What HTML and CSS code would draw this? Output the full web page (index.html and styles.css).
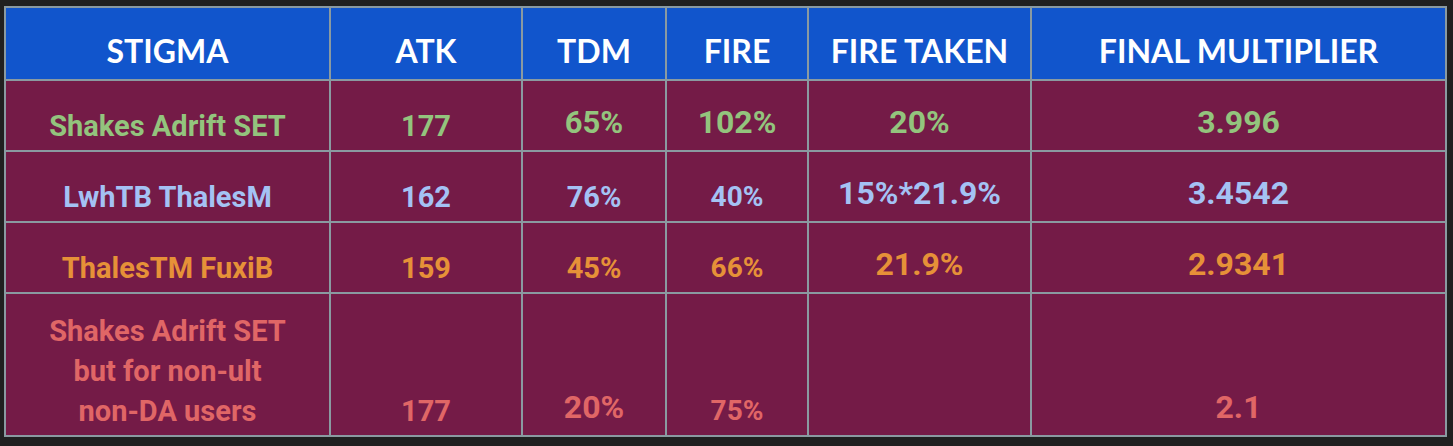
FILE: index.html
```html
<!DOCTYPE html>
<html>
<head>
<meta charset="utf-8">
<link rel="stylesheet" href="styles.css">
</head>
<body>
<div class="wrap">
<table class="sheet">
  <colgroup>
    <col class="c1"><col class="c2"><col class="c3"><col class="c4"><col class="c5"><col class="c6">
  </colgroup>
  <thead>
    <tr class="head">
      <th>STIGMA</th><th>ATK</th><th>TDM</th><th>FIRE</th><th>FIRE TAKEN</th><th>FINAL MULTIPLIER</th>
    </tr>
  </thead>
  <tbody>
    <tr class="row green">
      <td>Shakes Adrift SET</td><td>177</td><td class="mid">65%</td><td class="big">102%</td><td class="big">20%</td><td class="big">3.996</td>
    </tr>
    <tr class="row blue">
      <td>LwhTB ThalesM</td><td>162</td><td>76%</td><td class="small">40%</td><td class="big">15%*21.9%</td><td class="big">3.4542</td>
    </tr>
    <tr class="row orange">
      <td>ThalesTM FuxiB</td><td>159</td><td>45%</td><td class="small">66%</td><td class="big">21.9%</td><td class="big">2.9341</td>
    </tr>
    <tr class="row red tall">
      <td>Shakes Adrift SET<br>but for non-ult<br>non-DA users</td><td>177</td><td class="big">20%</td><td class="small">75%</td><td></td><td class="big">2.1</td>
    </tr>
  </tbody>
</table>
</div>
</body>
</html>
```
FILE: styles.css
```css
html, body {
  margin: 0;
  background: #202020;
}
.wrap {
  padding: 6px 0 0 4px;
}
.sheet {
  border-collapse: collapse;
  table-layout: fixed;
  width: 1443px;
}
.c1 { width: 325px; }
.c2 { width: 192px; }
.c3 { width: 144px; }
.c4 { width: 142px; }
.c5 { width: 223px; }
.c6 { width: 415px; }
.sheet th, .sheet td {
  border: 2px solid #8a9aa1;
  text-align: center;
  vertical-align: bottom;
  padding: 0 4px 4px;
  line-height: 40px;
  white-space: nowrap;
}
.head th {
  background: #1155cc;
  color: #ffffff;
  font-family: Lato, "Liberation Sans", sans-serif;
  font-weight: 700;
  font-size: 32px;
  height: 73px;
  box-sizing: border-box;
  padding-bottom: 8px;
}
.row td {
  background: #741b47;
  font-family: Roboto, "Liberation Sans", sans-serif;
  font-weight: 700;
  font-size: 29px;
  height: 71px;
  box-sizing: border-box;
}
.row td.big {
  font-size: 32px;
  padding-bottom: 8px;
}
.row td.mid {
  font-size: 31px;
  padding-bottom: 7px;
}
.row td.small {
  font-size: 28px;
}
.tall td { height: 143px; }
.green td { color: #93c47d; }
.blue td { color: #a4c2f4; }
.orange td { color: #e69138; }
.red td { color: #e06666; }
```
